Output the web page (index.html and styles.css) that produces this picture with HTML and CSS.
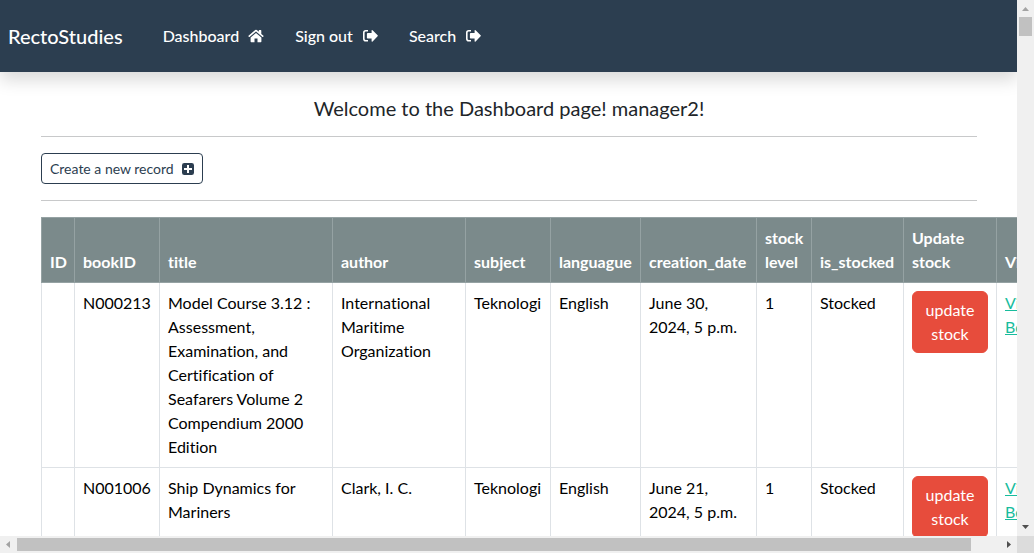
FILE: index.html
```
<!DOCTYPE html>
<html lang="en">
<head>
<meta charset="utf-8">
<title>RectoStudies</title>
<link rel="stylesheet" href="styles.css">
</head>
<body>
<svg class="symbols" aria-hidden="true">
  <symbol id="home" viewBox="0 0 16 14"><path d="M8 4 13.400 8.500v4q0 .7-.7.7H9.500V9.500h-3v3.700H3.300q-.7 0-.7-.7v-4zM7.200 1q.8-.7 1.600 0l2 1.700V1.500q0-.4.4-.4h1.700q.4 0 .4.4v3.400l2.200 1.900q.3.300.1.500l-.6.700q-.2.200-.5 0L8 2.600 1.500 8q-.3.200-.5 0l-.6-.7q-.2-.2.100-.5z"/></symbol>
  <symbol id="exit" viewBox="0 0 16 14"><path d="M6 1H3.800Q1 1 1 3.800v6Q1 12.600 3.800 12.600H6v-1.500H3.900q-1.300 0-1.300-1.300V3.800q0-1.300 1.300-1.300H6z"/><path d="M15.600 6.300q.5.500 0 1l-5 5.100q-1 .8-1-.4V9.500H5.700q-.8 0-.8-.8V4.900q0-.8.8-.8h3.900V1.600q0-1.200 1-.4z"/></symbol>
  <symbol id="plus" viewBox="0 0 12 12"><path fill-rule="evenodd" d="M2.300 0h7.400Q12 0 12 2.300v7.400q0 2.300-2.300 2.300H2.300Q0 12 0 9.700V2.300Q0 0 2.300 0zM5 2v3H2v2h3v3h2V7h3V5H7V2z"/></symbol>
</svg>
<div class="viewport">
  <div class="page">
    <nav class="navbar">
      <a class="brand" href="#">RectoStudies</a>
      <a class="nav-link" href="#">Dashboard <svg class="icon"><use href="#home"/></svg></a>
      <a class="nav-link" href="#">Sign out <svg class="icon"><use href="#exit"/></svg></a>
      <a class="nav-link" href="#">Search <svg class="icon"><use href="#exit"/></svg></a>
    </nav>
    <main class="content">
      <h1 class="welcome">Welcome to the Dashboard page! manager2!</h1>
      <hr class="rule">
      <button class="create" type="button">Create a new record <svg class="icon-plus"><use href="#plus"/></svg></button>
      <hr class="rule">
      <table class="records">
        <colgroup>
          <col class="c-id"><col class="c-code"><col class="c-title"><col class="c-author"><col class="c-code"><col class="c-lang"><col class="c-date"><col class="c-level"><col class="c-stocked"><col class="c-update"><col class="c-view">
        </colgroup>
        <thead>
          <tr><th>ID</th><th>bookID</th><th>title</th><th>author</th><th>subject</th><th>languague</th><th>creation_date</th><th>stock level</th><th>is_stocked</th><th>Update stock</th><th>View</th></tr>
        </thead>
        <tbody>
          <tr>
            <td></td><td>N000213</td><td>Model Course 3.12 : Assessment, Examination, and Certification of Seafarers Volume 2 Compendium 2000 Edition</td><td>International Maritime Organization</td><td>Teknologi</td><td>English</td><td>June 30, 2024, 5 p.m.</td><td>1</td><td>Stocked</td><td><button class="update" type="button">update stock</button></td><td><a class="view" href="#">View Book</a></td>
          </tr>
          <tr>
            <td></td><td>N001006</td><td>Ship Dynamics for Mariners</td><td>Clark, I. C.</td><td>Teknologi</td><td>English</td><td>June 21, 2024, 5 p.m.</td><td>1</td><td>Stocked</td><td><button class="update" type="button">update stock</button></td><td><a class="view" href="#">View Book</a></td>
          </tr>
        </tbody>
      </table>
    </main>
  </div>
  <div class="bar bar-y" aria-hidden="true">
    <svg class="arrow" viewBox="0 0 17 17"><path fill="#a3a3a3" d="M5 11h7L8.500 7z"/></svg>
    <div class="track"><div class="thumb"></div></div>
    <svg class="arrow" viewBox="0 0 17 17"><path fill="#505050" d="M5 6h7L8.500 10z"/></svg>
  </div>
  <div class="bar bar-x" aria-hidden="true">
    <svg class="arrow" viewBox="0 0 17 17"><path fill="#a3a3a3" d="M10 5v7L6 8.500z"/></svg>
    <div class="track"><div class="thumb"></div></div>
    <svg class="arrow" viewBox="0 0 17 17"><path fill="#505050" d="M7 5v7l4-3.500z"/></svg>
  </div>
  <div class="corner"></div>
</div>
</body>
</html>
```
FILE: styles.css
```
* { box-sizing: border-box; }
body {
  margin: 0;
  font-family: Lato, "Liberation Sans", sans-serif;
  font-size: 16px;
  line-height: 24px;
  font-variant-ligatures: none;
  color: #212529;
  background: #fff;
}
.symbols { display: none; }
.viewport {
  display: grid;
  grid-template-columns: minmax(0, 1fr) 17px;
  grid-template-rows: minmax(0, 1fr) 17px;
  height: 100vh;
}
.page { overflow: hidden; }
.navbar {
  display: flex;
  align-items: center;
  gap: 31px;
  height: 72px;
  padding: 0 8px;
  background: #2c3e50;
  box-shadow: 0 8px 16px rgba(0, 0, 0, .15);
}
.brand, .nav-link {
  color: #fff;
  font-weight: 500;
  text-decoration: none;
  white-space: nowrap;
}
.brand { margin-right: 9px; font-size: 20px; }
.nav-link { display: flex; align-items: center; gap: 9px; }
.icon { width: 16px; height: 14px; fill: currentColor; }
.content { padding: 24px 40px 0 41px; }
.welcome {
  margin: 0;
  font-size: 20px;
  line-height: 24px;
  font-weight: 400;
  text-align: center;
}
.rule {
  margin: 16px 0;
  border: 0;
  border-top: 1px solid #c8c9ca;
}
.create {
  display: flex;
  align-items: center;
  gap: 8px;
  padding: 4px 8px;
  border: 1px solid #2c3e50;
  border-radius: 4px;
  background: #fff;
  color: #2c3e50;
  font-family: inherit;
  font-size: 14px;
  line-height: 21px;
}
.icon-plus { width: 12px; height: 12px; fill: currentColor; }
.records {
  width: 1009px;
  table-layout: fixed;
  border-collapse: collapse;
  color: #000;
}
.c-id { width: 33px; }
.c-code { width: 85px; }
.c-title { width: 173px; }
.c-author { width: 133px; }
.c-lang { width: 90px; }
.c-date { width: 116px; }
.c-level { width: 55px; }
.c-stocked { width: 92px; }
.c-update { width: 93px; }
.c-view { width: 54px; }
.records th, .records td {
  padding: 8px;
  border: 1px solid #dee2e6;
  text-align: left;
  vertical-align: top;
}
.records th {
  border-color: #95a2a3;
  background: #7b8a8b;
  color: #fff;
  font-weight: 700;
  vertical-align: bottom;
}
.update {
  display: block;
  width: 100%;
  padding: 6px 12px;
  border: 1px solid #e74c3c;
  border-radius: 6px;
  background: #e74c3c;
  color: #fff;
  font: inherit;
}
.view { color: #18bc9c; }
.bar { display: flex; background: #f0f0f0; }
.bar-y { flex-direction: column; }
.arrow { flex: none; width: 17px; height: 17px; }
.track { display: flex; flex: 1; }
.thumb { background: #c1c1c1; }
.bar-y .thumb { width: 13px; height: 19px; margin: 0 2px; }
.bar-x .thumb { width: 97%; height: 13px; margin: 2px 0; }
.corner { background: #dcdcdc; }
```
